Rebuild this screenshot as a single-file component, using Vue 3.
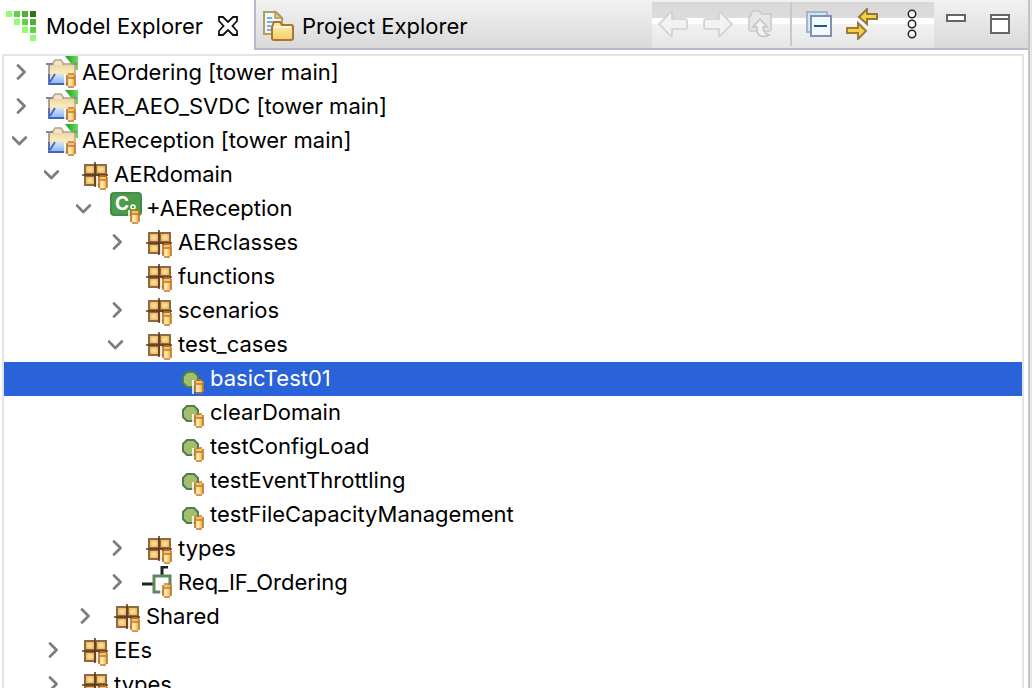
<script setup>
import { ref } from 'vue'

const rows = [
  { label: 'AEOrdering [tower main]', level: 0, icon: 'project', state: 'closed' },
  { label: 'AER_AEO_SVDC [tower main]', level: 0, icon: 'project', state: 'closed' },
  { label: 'AEReception [tower main]', level: 0, icon: 'project', state: 'open' },
  { label: 'AERdomain', level: 1, icon: 'package', state: 'open' },
  { label: '+AEReception', level: 2, icon: 'component', state: 'open' },
  { label: 'AERclasses', level: 3, icon: 'package', state: 'closed' },
  { label: 'functions', level: 3, icon: 'package', state: 'leaf' },
  { label: 'scenarios', level: 3, icon: 'package', state: 'closed' },
  { label: 'test_cases', level: 3, icon: 'package', state: 'open' },
  { label: 'basicTest01', level: 4, icon: 'function', state: 'leaf' },
  { label: 'clearDomain', level: 4, icon: 'function', state: 'leaf' },
  { label: 'testConfigLoad', level: 4, icon: 'function', state: 'leaf' },
  { label: 'testEventThrottling', level: 4, icon: 'function', state: 'leaf' },
  { label: 'testFileCapacityManagement', level: 4, icon: 'function', state: 'leaf' },
  { label: 'types', level: 3, icon: 'package', state: 'closed' },
  { label: 'Req_IF_Ordering', level: 3, icon: 'port', state: 'closed' },
  { label: 'Shared', level: 2, icon: 'package', state: 'closed' },
  { label: 'EEs', level: 1, icon: 'package', state: 'closed' },
  { label: 'types', level: 1, icon: 'package', state: 'closed' },
]
const selected = ref(9)

const squares = [
  [0, 0, '#8dff70'], [8, 0, '#62d147'], [16, 0, '#4fb035'], [24, 0, '#33701f'],
  [8, 8, '#8dff70'], [16, 8, '#62d147'], [24, 8, '#4fb035'],
  [16, 16, '#8dff70'], [24, 16, '#62d147'],
  [24, 24, '#8dff70'],
]
</script>

<template>
  <main class="view">
    <svg class="defs" aria-hidden="true">
      <defs>
        <linearGradient id="amber" x1="0" x2="1" y1="0" y2="0">
          <stop offset="0" stop-color="#f3b84e" />
          <stop offset="0.35" stop-color="#fff2c4" />
          <stop offset="1" stop-color="#f0a52c" />
        </linearGradient>
        <linearGradient id="tan" x1="0" x2="0" y1="0" y2="1">
          <stop offset="0" stop-color="#ecd6a6" />
          <stop offset="0.4" stop-color="#fdeabb" />
          <stop offset="1" stop-color="#e6c582" />
        </linearGradient>
        <linearGradient id="gold" x1="0" x2="0" y1="0" y2="1">
          <stop offset="0" stop-color="#fff0b8" />
          <stop offset="1" stop-color="#f6cf68" />
        </linearGradient>
        <linearGradient id="sky" x1="0" x2="0" y1="0" y2="1">
          <stop offset="0" stop-color="#e2f2ff" />
          <stop offset="1" stop-color="#8bb4ee" />
        </linearGradient>
        <linearGradient id="leaf" x1="0" x2="1" y1="0" y2="0">
          <stop offset="0" stop-color="#1d9a1d" />
          <stop offset="1" stop-color="#6be05c" />
        </linearGradient>
        <radialGradient id="cell" r="0.7">
          <stop offset="0" stop-color="#ffe9a0" />
          <stop offset="1" stop-color="#e9ad55" />
        </radialGradient>
        <symbol id="cyl" viewBox="0 0 12 15">
          <path d="M0 1H2V15H0Z" fill="#fff" opacity="0.8" />
          <path d="M3 2H11V13H3Z" fill="url(#amber)" />
          <path d="M4 1H10M4 14H10M3 2V13M11 2V13M4 5H10" stroke="#bd762a" stroke-width="1.600" fill="none" />
          <path d="M4 2H10V4H4Z" fill="#f8c25c" />
        </symbol>
      </defs>
    </svg>

    <header class="bar">
      <div class="tabs" role="tablist">
        <div class="tab active">
          <button class="tab-label" role="tab" aria-selected="true">
            <svg width="30" height="30" viewBox="0 0 30 30" aria-hidden="true">
              <rect v-for="(s, i) in squares" :key="i" :x="s[0]" :y="s[1]" width="6" height="6" :fill="s[2]" />
            </svg>
            <span>Model Explorer</span>
          </button>
          <button class="close" aria-label="Close Model Explorer">
            <svg width="22" height="22" viewBox="0 0 22 22" aria-hidden="true">
              <path d="M2 2H6L11 7L16 2H20V6L15.500 11L20 16V20H16L11 15L6 20H2V16L6.500 11L2 6Z" fill="#fff" stroke="#111" stroke-width="1.800" />
            </svg>
          </button>
        </div>
        <button class="tab inactive" role="tab" aria-selected="false">
          <svg width="32" height="32" viewBox="0 0 32 32" aria-hidden="true">
            <path d="M2 2H14L20 8V24H2Z" fill="#eef5fc" stroke="#b0a060" stroke-width="2" />
            <path d="M13 2V8H20Z" fill="#e5cf86" stroke="#b39c57" stroke-width="1.500" />
            <path d="M5 8H10M5 12H12M5 16H9M5 20H9" stroke="#668fc9" stroke-width="1.500" />
            <path d="M10 17L12 12H18L20 15H29Q31 15 31 17V28Q31 30 29 30H12Q10 30 10 28Z" fill="url(#gold)" stroke="#ad7332" stroke-width="2" />
            <path d="M12 17H29" stroke="#fff8dc" stroke-width="2" />
          </svg>
          <span>Project Explorer</span>
        </button>
      </div>

      <div class="tools" role="toolbar" aria-label="View actions">
        <button class="back" aria-label="Back" disabled>
          <svg width="30" height="26" viewBox="0 0 30 26"><path d="M1 13L13 1H14V8H27Q29 8 29 10V16Q29 18 27 18H14V25H13Z" fill="#f2f2f2" stroke="#cfcfcf" stroke-width="1.600" /></svg>
        </button>
        <button aria-label="Forward" disabled>
          <svg width="30" height="26" viewBox="0 0 30 26"><path d="M29 13L17 1H16V8H3Q1 8 1 10V16Q1 18 3 18H16V25H17Z" fill="#f2f2f2" stroke="#cfcfcf" stroke-width="1.600" /></svg>
        </button>
        <button aria-label="Up" disabled>
          <svg width="26" height="28" viewBox="0 0 26 28">
            <path d="M1 20V6H3V3L5 1H11L14 4H23V20Q23 21 21 21H3Q1 21 1 20Z" fill="#e6e6e6" stroke="#cacaca" stroke-width="1.600" />
            <path d="M12 9L19 17H15Q15 23 21 25Q12 29 9 22V17H5Z" fill="#f2f2f2" stroke="#c4c4c4" stroke-width="1.600" />
          </svg>
        </button>
        <span class="sep"></span>
        <button aria-label="Collapse all">
          <svg width="28" height="28" viewBox="0 0 28 28">
            <path d="M2 2H22V22H2Z" fill="#cfe6f5" stroke="#a3b4cd" stroke-width="2" />
            <path d="M6 6H26V26H6Z" fill="#f1fbff" stroke="#8390b1" stroke-width="2" />
            <path d="M9 16H22" stroke="#275584" stroke-width="2" />
          </svg>
        </button>
        <button aria-label="Link with editor">
          <svg width="32" height="32" viewBox="0 0 32 32">
            <path d="M13 9L21 1V6H31V11H21V16Z" fill="#f8cf45" stroke="#95763a" stroke-width="2" />
            <path d="M20 23L12 15V20H1V25H12V31Z" fill="#f8cf45" stroke="#a07935" stroke-width="2" />
          </svg>
        </button>
        <button class="more" aria-label="View menu">
          <svg width="10" height="30" viewBox="0 0 10 30" fill="#fff" stroke="#222" stroke-width="1.500"><circle cx="5" cy="5" r="3.700" /><circle cx="5" cy="15" r="3.700" /><circle cx="5" cy="25" r="3.700" /></svg>
        </button>
      </div>

      <div class="window">
        <button aria-label="Minimize">
          <svg width="20" height="20" viewBox="0 0 20 20"><path d="M1 1H19V7H1Z" fill="#fff" stroke="#666" stroke-width="2" /></svg>
        </button>
        <button aria-label="Maximize">
          <svg width="20" height="20" viewBox="0 0 20 20"><path d="M1 1H19V19H1ZM1 5H19" fill="#fff" stroke="#666" stroke-width="2" /></svg>
        </button>
      </div>
    </header>

    <ul class="tree" role="tree" aria-label="Model Explorer">
      <li
        v-for="(row, i) in rows"
        :key="i"
        role="treeitem"
        :aria-level="row.level + 1"
        :aria-selected="selected === i"
        :class="['row', 'level-' + row.level, { selected: selected === i }]"
        @click="selected = i"
      >
        <button v-if="row.state !== 'leaf'" class="twisty" :aria-label="'Toggle ' + row.label">
          <svg width="18" height="18" viewBox="0 0 18 18" fill="none" stroke="#7d7d7d" stroke-width="2.700" stroke-linecap="round" stroke-linejoin="round">
            <path v-if="row.state === 'closed'" d="M6 1.500L12.500 8L6 14.500" />
            <path v-else d="M0.800 5.500L7.300 12L13.800 5.500" />
          </svg>
        </button>
        <span v-else class="twisty"></span>

        <svg class="icon" width="32" height="32" viewBox="0 0 32 32" aria-hidden="true">
          <template v-if="row.icon === 'project'">
            <path d="M19 0H32V14H30Z" fill="url(#leaf)" />
            <path d="M7 11V7L9 4H15L17 7V11Z" fill="#f3e3c0" stroke="#b5a391" stroke-width="1.500" />
            <path d="M3 9H29V20H9L3 27Z" fill="url(#tan)" />
            <path d="M0 8H7M28 8H31" stroke="#8583a6" stroke-width="2" />
            <path d="M17 8H28" stroke="#b3a18d" stroke-width="1.600" />
            <path d="M3 9V18" stroke="#a08a86" stroke-width="1.600" />
            <path d="M29 9V19" stroke="#c7a56d" stroke-width="1.600" />
            <path d="M9 17L12 16L15 19H29L24 28H3Z" fill="url(#sky)" />
            <path d="M3 18V28H22M4 26L9 18" stroke="#4463bf" stroke-width="1.800" fill="none" />
          </template>
          <template v-else-if="row.icon === 'package'">
            <path d="M6 6H29V28H6Z" fill="#8f6a40" />
            <path d="M8 8H16V15H8Z" fill="url(#cell)" />
            <path d="M19 8H27V15H19Z" fill="url(#cell)" />
            <path d="M8 19H16V26H8Z" fill="url(#cell)" />
            <path d="M19 19H27V26H19Z" fill="url(#cell)" />
            <path d="M17 4V29M4 17H30" stroke="#5c3a20" stroke-width="1.600" />
          </template>
          <template v-else-if="row.icon === 'component'">
            <rect x="1" y="1" width="30" height="22" rx="3" fill="#4c9d4a" stroke="#448a48" stroke-width="2" />
            <text class="glyph" x="5" y="18">C</text>
            <circle cx="23" cy="15" r="2" fill="none" stroke="#fff" stroke-width="1.500" />
          </template>
          <template v-else-if="row.icon === 'function'">
            <path d="M13 10H20L24 14V21L20 25H13L9 21V14Z" fill="#a4bf6c" stroke="#4d7d50" stroke-width="2" />
          </template>
          <template v-else>
            <path d="M0 18H11M20 9V1H26" stroke="#222" stroke-width="3" fill="none" />
            <path d="M12 10H28V26H12Z" fill="#fff" stroke="#5f8a60" stroke-width="3" />
          </template>
          <use href="#cyl" x="18" y="17" width="12" height="15" />
        </svg>
        <span class="label">{{ row.label }}</span>
      </li>
    </ul>
  </main>
</template>

<style>
html,
body,
#app {
  height: 100%;
}
body {
  margin: 0;
  overflow: hidden;
}
</style>

<style scoped>
.view {
  display: flex;
  flex-direction: column;
  box-sizing: border-box;
  height: 100%;
  overflow: hidden;
  border-right: 2px solid #e6e6e6;
  box-shadow: inset -2px 0 #c3c3c3;
  padding-right: 2px;
  background: #fff;
  color: #000;
  font-family: Inter, "Liberation Sans", sans-serif;
  font-size: 22px;
}
.defs {
  position: absolute;
  width: 0;
  height: 0;
}
button {
  display: flex;
  align-items: center;
  margin: 0;
  padding: 0;
  border: 0;
  background: none;
  color: inherit;
  font: inherit;
}
svg {
  display: block;
  flex: none;
}
.bar {
  display: flex;
  flex: none;
  height: 50px;
  box-sizing: border-box;
  background: linear-gradient(#f2f2f2, #d8d8d8);
}
.tabs {
  display: flex;
  flex: 1;
  border-bottom: 2px solid #b5b9cc;
}
.tab {
  display: flex;
  align-items: center;
  white-space: nowrap;
}
.active {
  box-sizing: border-box;
  width: 254px;
  height: 50px;
  padding: 2px 0 0 6px;
  gap: 14px;
  background: #fff;
}
.tab-label {
  gap: 10px;
}
.inactive {
  flex: 1;
  gap: 8px;
  padding: 4px 0 0 6px;
  border-left: 2px solid #b5b9cc;
}
.tools {
  display: flex;
  align-items: center;
  box-sizing: border-box;
  width: 282px;
  padding-left: 6px;
  border-bottom: 2px solid #b5b9cc;
  background: linear-gradient(#f0f0f0 2px, #d9d9d9 2px, #dcdcdc 18px, #fff 18px, #fff 24px, #f2f2f2 24px, #e5e5e5);
}
.tools button {
  justify-content: center;
  width: 43px;
  height: 48px;
}
.tools .back {
  width: 30px;
  margin-right: 8px;
}
.sep {
  width: 2px;
  height: 44px;
  margin: 0 5px 0 8px;
  background: #c9c9c9;
}
.tools .more {
  margin-left: 7px;
}
.window {
  display: flex;
  align-items: flex-start;
  gap: 24px;
  padding: 14px 18px 0 12px;
  border-bottom: 2px solid #b5b9cc;
}
.tree {
  flex: 1;
  min-height: 0;
  overflow: hidden;
  margin: 4px 4px 0 2px;
  padding: 0;
  border: 2px solid #e4e4e4;
  border-bottom: 0;
  list-style: none;
}
.row {
  display: flex;
  height: 34px;
  line-height: 32px;
  white-space: nowrap;
}
.level-0 { padding-left: 8px; }
.level-1 { padding-left: 40px; }
.level-2 { padding-left: 72px; }
.level-3 { padding-left: 104px; }
.level-4 { padding-left: 136px; }
.twisty {
  width: 34px;
  height: 34px;
}
.label {
  margin-left: 4px;
}
.selected {
  background: #2962d9;
  color: #fff;
}
.glyph {
  fill: #fff;
  font-size: 19px;
  font-weight: 700;
}
</style>
